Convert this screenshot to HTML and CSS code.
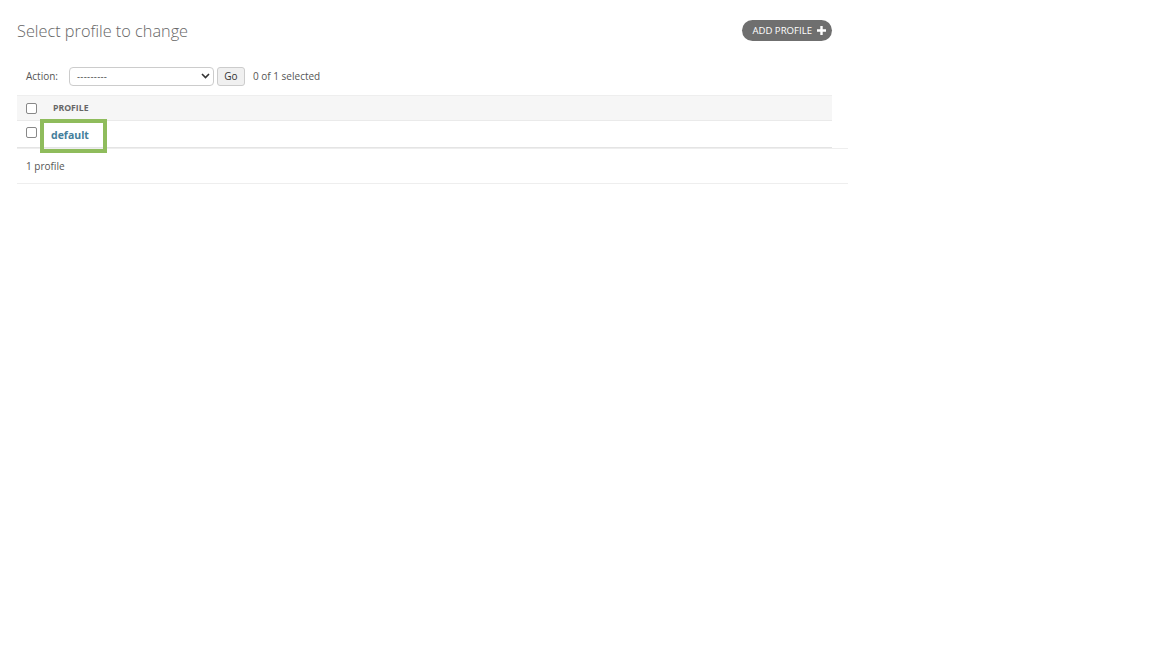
FILE: index.html
```html
<!DOCTYPE html>
<html>
<head>
<meta charset="utf-8">
<link rel="stylesheet" href="styles.css">
</head>
<body>
<div class="content">
  <div class="head">
    <h1 class="title">Select profile to change</h1>
    <a class="addlink" href="#">ADD PROFILE <svg class="plus" width="9" height="9" viewBox="0 0 9 9"><path d="M3.3 0h2.4v3.3H9v2.4H5.7V9H3.3V5.7H0V3.3h3.3z" fill="#fff"/></svg></a>
  </div>
  <div class="changelist">
    <div class="actions">
      <span class="label">Action:</span>
      <div class="select"><span>---------</span><svg width="9" height="6" viewBox="0 0 9 6"><path d="M1 1l3.5 3.5L8 1" stroke="#333" stroke-width="1.6" fill="none"/></svg></div>
      <button class="go">Go</button>
      <span class="counter">0 of 1 selected</span>
    </div>
    <table class="results">
      <thead>
        <tr><th class="cb"><span class="box"></span></th><th class="col">PROFILE</th></tr>
      </thead>
      <tbody>
        <tr><td class="cb"><span class="box"></span></td><td class="name"><a href="#">default</a><span class="hl"></span></td></tr>
      </tbody>
    </table>
    <p class="paginator">1 profile</p>
  </div>
</div>
</body>
</html>
```
FILE: styles.css
```css
body {
  margin: 0;
  font-family: "Open Sans", "Noto Sans", sans-serif;
  color: #333;
  background: #fff;
}
.content {
  padding: 14px 0 0 17px;
  width: 831px;
}
.head {
  width: 815px;
  display: flex;
  justify-content: space-between;
  align-items: flex-start;
}
.title {
  margin: 6px 0 0;
  font-size: 16.3px;
  font-weight: 300;
  color: #666;
}
.addlink {
  margin-top: 6px;
  display: flex;
  align-items: center;
  gap: 5px;
  height: 21px;
  box-sizing: border-box;
  padding: 0 6px 0 10px;
  border-radius: 11px;
  background: #6f6f6f;
  color: #fff;
  font-size: 9.6px;
  text-decoration: none;
}
.plus { display: block; }
.changelist { margin-top: 24px; }
.actions {
  display: flex;
  align-items: center;
  height: 20px;
  padding-left: 9px;
  font-size: 10px;
  color: #555;
}
.label { width: 43px; }
.select {
  width: 145px;
  height: 19px;
  box-sizing: border-box;
  border: 1px solid #ccc;
  border-radius: 4px;
  display: flex;
  align-items: center;
  justify-content: space-between;
  padding: 0 3px 0 7px;
  font-size: 9.5px;
  color: #333;
}
.select span { letter-spacing: 0.3px; }
.go {
  margin-left: 3px;
  width: 28px;
  height: 19px;
  border: 1px solid #ccc;
  border-radius: 3px;
  background: #f0f0f0;
  font-family: inherit;
  font-size: 10px;
  color: #333;
  padding: 0;
}
.counter { margin-left: 8px; color: #555; }
.results {
  margin-top: 9px;
  width: 815px;
  border-collapse: collapse;
}
.results th {
  background: #f6f6f6;
  border-top: 1px solid #eee;
  border-bottom: 1px solid #eaeaea;
  height: 24px;
  padding: 0;
  text-align: left;
  font-size: 8.7px;
  font-weight: 700;
  color: #666;
  vertical-align: middle;
}
.results td {
  height: 27px;
  padding: 0 0 3px;
  box-sizing: border-box;
  border-bottom: 1px solid #e4e4e4;
  vertical-align: middle;
}
.results th.cb, .results td.cb { width: 19px; padding-left: 9px; }
.box {
  display: block;
  width: 9px;
  height: 9px;
  border: 1px solid #888;
  border-radius: 2px;
  background: #fff;
}
.results th.col { padding-left: 8px; }
.results td.name { position: relative; padding-left: 6px; }
.name a {
  color: #447e9b;
  font-weight: 700;
  font-size: 10.5px;
  text-decoration: none;
}
.hl {
  position: absolute;
  left: -5px;
  top: -2px;
  width: 67px;
  height: 34px;
  box-sizing: border-box;
  border: 4px solid #8fbc5c;
}
.paginator {
  margin: 0;
  border-top: 1px solid #eee;
  border-bottom: 1px solid #eee;
  height: 36px;
  box-sizing: border-box;
  padding-left: 9px;
  display: flex;
  align-items: center;
  font-size: 10px;
  color: #555;
}
```
